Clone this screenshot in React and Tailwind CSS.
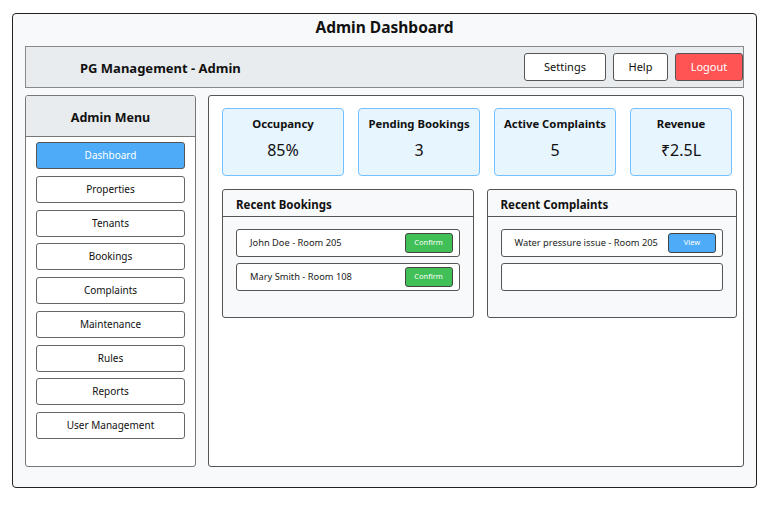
import React from "react";

const menu = ["Dashboard", "Properties", "Tenants", "Bookings", "Complaints", "Maintenance", "Rules", "Reports", "User Management"];

const stats = [
  { label: "Occupancy", value: "85%", w: "w-[122px]" },
  { label: "Pending Bookings", value: "3", w: "w-[122px]" },
  { label: "Active Complaints", value: "5", w: "w-[122px]" },
  { label: "Revenue", value: "₹2.5L", w: "w-[102px]" },
];

function Row({ text, action, color }) {
  return (
    <div className="h-[28px] flex items-center justify-between pl-[13px] pr-[6px] bg-white border border-[#555] rounded-[3px]">
      <span className="text-[9.3px] text-[#222] whitespace-nowrap">{text}</span>
      {action && (
        <button className={"w-[48px] h-[20px] rounded-[3px] border border-[#444] text-[7.5px] text-white " + color}>{action}</button>
      )}
    </div>
  );
}

export default function App() {
  return (
    <div className="w-[767px] h-[506px] bg-white pt-[13px] pl-[12px]" style={{ fontFamily: '"Noto Sans", sans-serif' }}>
      <div className="w-[745px] h-[475px] bg-[#f8f9fa] border-[1.5px] border-[#222] rounded-[4px] px-[12px] flex flex-col">
        <h1 className="h-[32px] flex items-center justify-center text-[15.5px] font-bold text-[#111] pb-[4px]">Admin Dashboard</h1>

        <div className="h-[42px] bg-[#e9ecef] border border-[#888] flex items-center pl-[54px]">
          <span className="text-[13px] font-bold text-[#111] mt-[3px]">PG Management - Admin</span>
          <div className="ml-auto flex gap-[7px]">
            <button className="w-[82px] h-[28px] bg-white border border-[#555] rounded-[3px] text-[11px] text-[#111]">Settings</button>
            <button className="w-[55px] h-[28px] bg-white border border-[#555] rounded-[3px] text-[11px] text-[#111]">Help</button>
            <button className="w-[68px] h-[28px] bg-[#ff5454] border border-[#555] rounded-[3px] text-[11px] text-white">Logout</button>
          </div>
        </div>

        <div className="flex gap-[12px] mt-[7px]">
          <aside className="w-[171px] h-[372px] bg-white border border-[#777] rounded-[3px] overflow-hidden">
            <div className="h-[41px] bg-[#e9ecef] border-b border-[#777] flex items-center justify-center pt-[5px] text-[12.5px] font-bold text-[#111]">Admin Menu</div>
            <div className="px-[10px] pt-[5px] flex flex-col gap-[6.75px]">
              {menu.map((m, i) => (
                <button
                  key={m}
                  className={
                    "h-[27px] rounded-[3px] border text-[10px] " +
                    (i === 0 ? "bg-[#4dabf7] border-[#555] text-white" : "bg-white border-[#666] text-[#111]")
                  }
                >
                  {m}
                </button>
              ))}
            </div>
          </aside>

          <main className="w-[536px] h-[372px] bg-white border border-[#555] rounded-[3px] pl-[13px] pr-[6px] pt-[12px]">
            <div className="flex gap-[14px]">
              {stats.map((s) => (
                <div key={s.label} className={"h-[68px] bg-[#e7f5ff] border border-[#74c0fc] rounded-[4px] flex flex-col items-center pt-[7px] " + s.w}>
                  <span className="text-[11.3px] font-bold text-[#111]">{s.label}</span>
                  <span className="text-[16px] text-[#111] mt-[5px]">{s.value}</span>
                </div>
              ))}
            </div>

            <div className="flex gap-[13px] mt-[13px]">
              <section className="w-[252px] h-[129px] bg-[#f8f9fa] border border-[#555] rounded-[3px]">
                <div className="h-[27px] border-b border-[#555] flex items-center pl-[13px] pt-[3px] text-[11.5px] font-bold text-[#111]">Recent Bookings</div>
                <div className="px-[13px] pt-[12px] flex flex-col gap-[6px]">
                  <Row text="John Doe - Room 205" action="Confirm" color="bg-[#40c057]" />
                  <Row text="Mary Smith - Room 108" action="Confirm" color="bg-[#40c057]" />
                </div>
              </section>
              <section className="w-[251px] h-[129px] bg-[#f8f9fa] border border-[#555] rounded-[3px]">
                <div className="h-[27px] border-b border-[#555] flex items-center pl-[13px] pt-[3px] text-[11.5px] font-bold text-[#111]">Recent Complaints</div>
                <div className="px-[13px] pt-[12px] flex flex-col gap-[6px]">
                  <Row text="Water pressure issue - Room 205" action="View" color="bg-[#4dabf7]" />
                  <Row text="" />
                </div>
              </section>
            </div>
          </main>
        </div>
      </div>
    </div>
  );
}
